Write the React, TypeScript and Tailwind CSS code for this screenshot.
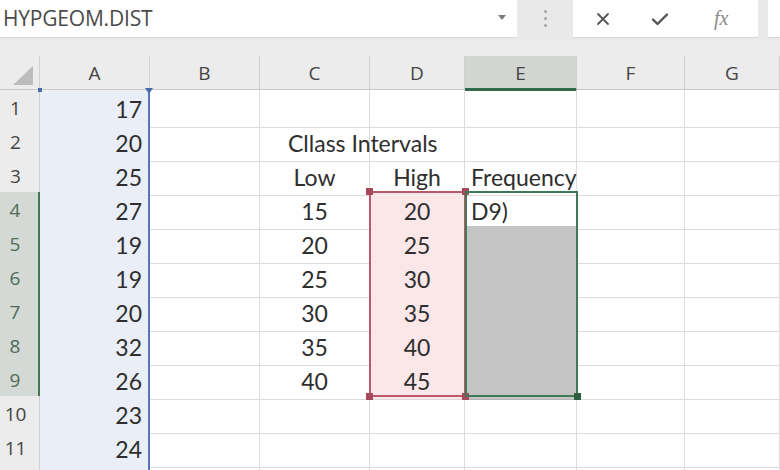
import React from "react";

const cols = ["A", "B", "C", "D", "E", "F", "G"];
const colGrid = "grid grid-cols-[40px_110px_110px_110px_95px_112px_108px_1fr]";

const aValues = [17, 20, 25, 27, 19, 19, 20, 32, 26, 23, 24, ""];

type Cell = { text?: string; align?: "left" | "center" | "right"; cls?: string };

function cellsFor(row: number): Record<string, Cell> {
  const low = [15, 20, 25, 30, 35, 40];
  const out: Record<string, Cell> = {};
  if (row === 2) out.C = { text: "Cllass Intervals", align: "left", cls: "pl-[28px]" };
  if (row === 3) {
    out.C = { text: "Low", align: "center" };
    out.D = { text: "High", align: "center" };
    out.E = { text: "Frequency", align: "left", cls: "pl-[6px]" };
  }
  if (row >= 4 && row <= 9) {
    out.C = { text: String(low[row - 4]), align: "center" };
    out.D = { text: String(low[row - 4] + 5), align: "center" };
    if (row === 4) out.E = { text: "D9)", align: "left", cls: "pl-[6px]" };
  }
  return out;
}

function Handle({ className }: { className: string }) {
  return <div className={`absolute w-[7px] h-[7px] ${className}`} />;
}

export default function App() {
  const rows = Array.from({ length: 12 }, (_, i) => i + 1);

  return (
    <div className="w-[780px] h-[470px] overflow-hidden bg-white font-['Lato',sans-serif]">
      {/* formula bar */}
      <div className="flex h-[40px] bg-[#e9e9e9]">
        <div className="w-[517px] h-[38px] bg-white flex items-center justify-between pl-[3px] pr-[11px] border-b border-[#d6d6d6]">
          <span className="font-['Open_Sans',sans-serif] text-[21px] text-[#4a4a4a] tracking-[-0.2px]">
            HYPGEOM.DIST
          </span>
          <svg width="8" height="5" viewBox="0 0 8 5" className="mb-[3px]">
            <path d="M0 0 L8 0 L4 5 Z" fill="#7a7a7a" />
          </svg>
        </div>
        <div className="w-[56px] flex flex-col items-center justify-center gap-[4px] pb-[4px]">
          <div className="w-[3px] h-[3px] rounded-full bg-[#a5a5a5]" />
          <div className="w-[3px] h-[3px] rounded-full bg-[#a5a5a5]" />
          <div className="w-[3px] h-[3px] rounded-full bg-[#a5a5a5]" />
        </div>
        <div className="w-[185px] h-[38px] bg-white border-b border-[#d6d6d6] flex items-center">
          <svg width="14" height="14" viewBox="0 0 14 14" className="ml-[23px]">
            <path d="M2 2 L12 12 M12 2 L2 12" stroke="#555" strokeWidth="1.8" strokeLinecap="round" />
          </svg>
          <svg width="18" height="14" viewBox="0 0 18 14" className="ml-[41px]">
            <path d="M2 7.5 L6.5 12 L16 2.5" stroke="#555" strokeWidth="2.4" fill="none" strokeLinecap="round" strokeLinejoin="round" />
          </svg>
          <span className="ml-[45px] mb-[2px] font-['Liberation_Serif',serif] italic text-[20px] text-[#8a8a8a]">fx</span>
        </div>
        <div className="w-[10px]" />
        <div className="flex-1 h-[38px] bg-white border-b border-[#d6d6d6]" />
      </div>

      <div className="h-[16px] bg-[#ececec]" />

      {/* column headers */}
      <div className={`${colGrid} h-[34px] bg-[#ececec] border-b border-[#c9c9c9] font-['Open_Sans',sans-serif] text-[19px] text-[#444]`}>
        <div className="relative border-r border-[#d0d0d0]">
          <svg width="20" height="19" viewBox="0 0 20 19" className="absolute left-[13px] top-[10px]">
            <path d="M20 0 L20 19 L0 19 Z" fill="#bcbcbc" />
          </svg>
        </div>
        {cols.map((c) => (
          <div
            key={c}
            className={`flex items-center justify-center border-r border-[#d0d0d0] ${
              c === "E" ? "bg-[#d2d5d2] border-b-[3px] border-b-[#2f6b48] pt-[3px]" : ""
            }`}
          >
            {c}
          </div>
        ))}
      </div>

      {/* sheet body */}
      <div className="relative">
        {rows.map((r) => {
          const cells = cellsFor(r);
          const selRow = r >= 4 && r <= 9;
          return (
            <div key={r} className={`${colGrid} h-[34px]`}>
              <div
                className={`flex items-center justify-center pr-[8px] border-b font-['Open_Sans',sans-serif] text-[19px] ${
                  selRow
                    ? "bg-[#d5d9d5] text-[#4d6b58] border-r-[2px] border-r-[#3f7a55] border-b-[#c6cbc6]"
                    : "bg-[#ececec] text-[#444] border-r border-r-[#d0d0d0] border-b-[#d6d6d6]"
                }`}
              >
                {r < 12 ? r : ""}
              </div>
              <div className="flex items-center justify-end pr-[6px] pt-[2px] bg-[#e9eef7] border-b border-[#d8dde6] border-r-[2px] border-r-[#5577b5] text-[23px] text-[#2e2e2e]">
                {aValues[r - 1]}
              </div>
              {cols.slice(1).map((c) => {
                const cell = cells[c];
                let bg = "";
                if (c === "D" && selRow) bg = "bg-[#fbe6e8]";
                if (c === "E" && r >= 5 && r <= 9) bg = "bg-[#c5c5c5] border-b-[#b5b5b5]";
                const justify =
                  cell?.align === "left" ? "justify-start" : cell?.align === "right" ? "justify-end" : "justify-center";
                return (
                  <div
                    key={c}
                    className={`flex items-center pt-[2px] border-r border-b border-[#dcdcdc] text-[23px] text-[#2e2e2e] whitespace-nowrap overflow-visible ${justify} ${bg} ${
                      cell?.cls ?? ""
                    }`}
                  >
                    {cell?.text}
                  </div>
                );
              })}
            </div>
          );
        })}

        {/* A column copy markers */}
        <div className="absolute left-[38px] top-[-2px] w-[4px] h-[4px] bg-[#4a6aa8]" />
        <svg width="8" height="6" viewBox="0 0 8 6" className="absolute left-[145px] top-[-2px]">
          <path d="M0 0 L8 0 L4 6 Z" fill="#4a6aa8" />
        </svg>

        {/* D4:D9 reference range */}
        <div className="absolute left-[369px] top-[101px] w-[97px] h-[206px] border-[2px] border-[#b9596a]" />
        <Handle className="left-[366px] top-[98px] bg-[#a8485a]" />
        <Handle className="left-[462px] top-[98px] bg-[#a8485a]" />
        <Handle className="left-[366px] top-[303px] bg-[#a8485a]" />
        <Handle className="left-[462px] top-[303px] bg-[#a8485a]" />

        {/* E4:E9 selection */}
        <div className="absolute left-[465px] top-[101px] w-[113px] h-[206px] border-[2px] border-[#3e7a57]" />
        <Handle className="left-[574px] top-[303px] bg-[#2f5f43]" />
      </div>
    </div>
  );
}
